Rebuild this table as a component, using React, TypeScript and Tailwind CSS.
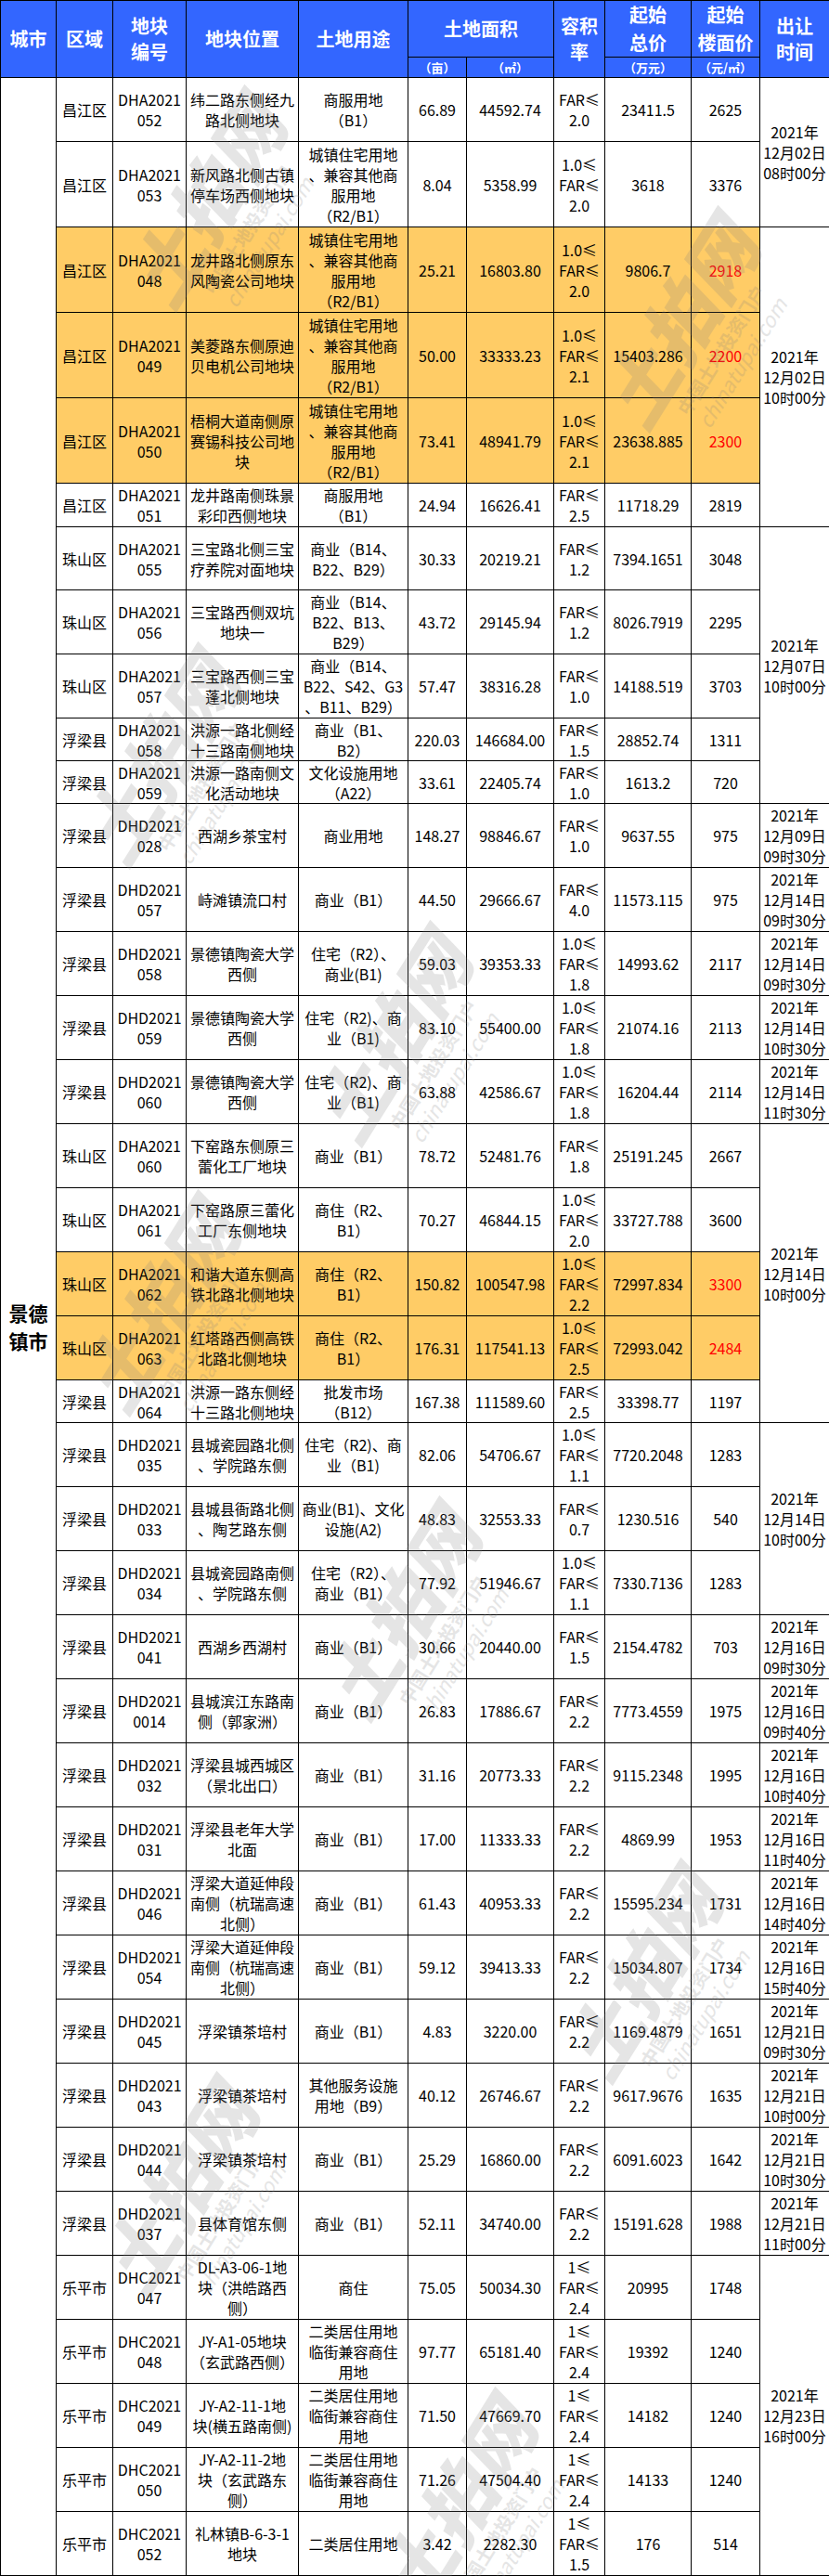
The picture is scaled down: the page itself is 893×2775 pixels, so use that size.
import React from "react";

type Row = {
  area: string;
  code: string[];
  loc: string[];
  use: string[];
  mu: string;
  sqm: string;
  far: string[];
  total: string;
  price: string;
  h: number;
  hl?: boolean;
};

const R2B1 = ["城镇住宅用地", "、兼容其他商", "服用地", "（R2/B1）"];
const LIVE = ["二类居住用地", "临街兼容商住", "用地"];
const B1 = ["商业（B1）"];
const F22 = ["FAR≤", "2.2"];
const FP = ["浮梁大道延伸段", "南侧（杭瑞高速", "北侧）"];

const rows: Row[] = [
  { area: "昌江区", code: ["DHA2021", "052"], loc: ["纬二路东侧经九", "路北侧地块"], use: ["商服用地", "（B1）"], mu: "66.89", sqm: "44592.74", far: ["FAR≤", "2.0"], total: "23411.5", price: "2625", h: 69 },
  { area: "昌江区", code: ["DHA2021", "053"], loc: ["新风路北侧古镇", "停车场西侧地块"], use: R2B1, mu: "8.04", sqm: "5358.99", far: ["1.0≤", "FAR≤", "2.0"], total: "3618", price: "3376", h: 92 },
  { area: "昌江区", code: ["DHA2021", "048"], loc: ["龙井路北侧原东", "风陶瓷公司地块"], use: R2B1, mu: "25.21", sqm: "16803.80", far: ["1.0≤", "FAR≤", "2.0"], total: "9806.7", price: "2918", h: 92, hl: true },
  { area: "昌江区", code: ["DHA2021", "049"], loc: ["美菱路东侧原迪", "贝电机公司地块"], use: R2B1, mu: "50.00", sqm: "33333.23", far: ["1.0≤", "FAR≤", "2.1"], total: "15403.286", price: "2200", h: 92, hl: true },
  { area: "昌江区", code: ["DHA2021", "050"], loc: ["梧桐大道南侧原", "赛锡科技公司地", "块"], use: R2B1, mu: "73.41", sqm: "48941.79", far: ["1.0≤", "FAR≤", "2.1"], total: "23638.885", price: "2300", h: 92, hl: true },
  { area: "昌江区", code: ["DHA2021", "051"], loc: ["龙井路南侧珠景", "彩印西侧地块"], use: ["商服用地", "（B1）"], mu: "24.94", sqm: "16626.41", far: ["FAR≤", "2.5"], total: "11718.29", price: "2819", h: 47 },
  { area: "珠山区", code: ["DHA2021", "055"], loc: ["三宝路北侧三宝", "疗养院对面地块"], use: ["商业（B14、", "B22、B29）"], mu: "30.33", sqm: "20219.21", far: ["FAR≤", "1.2"], total: "7394.1651", price: "3048", h: 68 },
  { area: "珠山区", code: ["DHA2021", "056"], loc: ["三宝路西侧双坑", "地块一"], use: ["商业（B14、", "B22、B13、", "B29）"], mu: "43.72", sqm: "29145.94", far: ["FAR≤", "1.2"], total: "8026.7919", price: "2295", h: 69 },
  { area: "珠山区", code: ["DHA2021", "057"], loc: ["三宝路西侧三宝", "蓬北侧地块"], use: ["商业（B14、", "B22、S42、G3", "、B11、B29）"], mu: "57.47", sqm: "38316.28", far: ["FAR≤", "1.0"], total: "14188.519", price: "3703", h: 69 },
  { area: "浮梁县", code: ["DHA2021", "058"], loc: ["洪源一路北侧经", "十三路南侧地块"], use: ["商业（B1、", "B2）"], mu: "220.03", sqm: "146684.00", far: ["FAR≤", "1.5"], total: "28852.74", price: "1311", h: 46 },
  { area: "浮梁县", code: ["DHA2021", "059"], loc: ["洪源一路南侧文", "化活动地块"], use: ["文化设施用地", "（A22）"], mu: "33.61", sqm: "22405.74", far: ["FAR≤", "1.0"], total: "1613.2", price: "720", h: 46 },
  { area: "浮梁县", code: ["DHD2021", "028"], loc: ["西湖乡茶宝村"], use: ["商业用地"], mu: "148.27", sqm: "98846.67", far: ["FAR≤", "1.0"], total: "9637.55", price: "975", h: 69 },
  { area: "浮梁县", code: ["DHD2021", "057"], loc: ["峙滩镇流口村"], use: B1, mu: "44.50", sqm: "29666.67", far: ["FAR≤", "4.0"], total: "11573.115", price: "975", h: 69 },
  { area: "浮梁县", code: ["DHD2021", "058"], loc: ["景德镇陶瓷大学", "西侧"], use: ["住宅（R2）、", "商业(B1)"], mu: "59.03", sqm: "39353.33", far: ["1.0≤", "FAR≤", "1.8"], total: "14993.62", price: "2117", h: 69 },
  { area: "浮梁县", code: ["DHD2021", "059"], loc: ["景德镇陶瓷大学", "西侧"], use: ["住宅（R2)、商", "业（B1)"], mu: "83.10", sqm: "55400.00", far: ["1.0≤", "FAR≤", "1.8"], total: "21074.16", price: "2113", h: 69 },
  { area: "浮梁县", code: ["DHD2021", "060"], loc: ["景德镇陶瓷大学", "西侧"], use: ["住宅（R2)、商", "业（B1)"], mu: "63.88", sqm: "42586.67", far: ["1.0≤", "FAR≤", "1.8"], total: "16204.44", price: "2114", h: 69 },
  { area: "珠山区", code: ["DHA2021", "060"], loc: ["下窑路东侧原三", "蕾化工厂地块"], use: B1, mu: "78.72", sqm: "52481.76", far: ["FAR≤", "1.8"], total: "25191.245", price: "2667", h: 69 },
  { area: "珠山区", code: ["DHA2021", "061"], loc: ["下窑路原三蕾化", "工厂东侧地块"], use: ["商住（R2、", "B1）"], mu: "70.27", sqm: "46844.15", far: ["1.0≤", "FAR≤", "2.0"], total: "33727.788", price: "3600", h: 69 },
  { area: "珠山区", code: ["DHA2021", "062"], loc: ["和谐大道东侧高", "铁北路北侧地块"], use: ["商住（R2、", "B1）"], mu: "150.82", sqm: "100547.98", far: ["1.0≤", "FAR≤", "2.2"], total: "72997.834", price: "3300", h: 69, hl: true },
  { area: "珠山区", code: ["DHA2021", "063"], loc: ["红塔路西侧高铁", "北路北侧地块"], use: ["商住（R2、", "B1）"], mu: "176.31", sqm: "117541.13", far: ["1.0≤", "FAR≤", "2.5"], total: "72993.042", price: "2484", h: 69, hl: true },
  { area: "浮梁县", code: ["DHA2021", "064"], loc: ["洪源一路东侧经", "十三路北侧地块"], use: ["批发市场", "（B12）"], mu: "167.38", sqm: "111589.60", far: ["FAR≤", "2.5"], total: "33398.77", price: "1197", h: 46 },
  { area: "浮梁县", code: ["DHD2021", "035"], loc: ["县城瓷园路北侧", "、学院路东侧"], use: ["住宅（R2)、商", "业（B1)"], mu: "82.06", sqm: "54706.67", far: ["1.0≤", "FAR≤", "1.1"], total: "7720.2048", price: "1283", h: 69 },
  { area: "浮梁县", code: ["DHD2021", "033"], loc: ["县城县衙路北侧", "、陶艺路东侧"], use: ["商业(B1)、文化", "设施(A2)"], mu: "48.83", sqm: "32553.33", far: ["FAR≤", "0.7"], total: "1230.516", price: "540", h: 69 },
  { area: "浮梁县", code: ["DHD2021", "034"], loc: ["县城瓷园路南侧", "、学院路东侧"], use: ["住宅（R2）、", "商业（B1）"], mu: "77.92", sqm: "51946.67", far: ["1.0≤", "FAR≤", "1.1"], total: "7330.7136", price: "1283", h: 69 },
  { area: "浮梁县", code: ["DHD2021", "041"], loc: ["西湖乡西湖村"], use: B1, mu: "30.66", sqm: "20440.00", far: ["FAR≤", "1.5"], total: "2154.4782", price: "703", h: 69 },
  { area: "浮梁县", code: ["DHD2021", "0014"], loc: ["县城滨江东路南", "侧（郭家洲）"], use: B1, mu: "26.83", sqm: "17886.67", far: F22, total: "7773.4559", price: "1975", h: 69 },
  { area: "浮梁县", code: ["DHD2021", "032"], loc: ["浮梁县城西城区", "（景北出口）"], use: B1, mu: "31.16", sqm: "20773.33", far: F22, total: "9115.2348", price: "1995", h: 69 },
  { area: "浮梁县", code: ["DHD2021", "031"], loc: ["浮梁县老年大学", "北面"], use: B1, mu: "17.00", sqm: "11333.33", far: F22, total: "4869.99", price: "1953", h: 69 },
  { area: "浮梁县", code: ["DHD2021", "046"], loc: FP, use: B1, mu: "61.43", sqm: "40953.33", far: F22, total: "15595.234", price: "1731", h: 69 },
  { area: "浮梁县", code: ["DHD2021", "054"], loc: FP, use: B1, mu: "59.12", sqm: "39413.33", far: F22, total: "15034.807", price: "1734", h: 69 },
  { area: "浮梁县", code: ["DHD2021", "045"], loc: ["浮梁镇茶培村"], use: B1, mu: "4.83", sqm: "3220.00", far: F22, total: "1169.4879", price: "1651", h: 69 },
  { area: "浮梁县", code: ["DHD2021", "043"], loc: ["浮梁镇茶培村"], use: ["其他服务设施", "用地（B9）"], mu: "40.12", sqm: "26746.67", far: F22, total: "9617.9676", price: "1635", h: 69 },
  { area: "浮梁县", code: ["DHD2021", "044"], loc: ["浮梁镇茶培村"], use: B1, mu: "25.29", sqm: "16860.00", far: F22, total: "6091.6023", price: "1642", h: 69 },
  { area: "浮梁县", code: ["DHD2021", "037"], loc: ["县体育馆东侧"], use: B1, mu: "52.11", sqm: "34740.00", far: F22, total: "15191.628", price: "1988", h: 69 },
  { area: "乐平市", code: ["DHC2021", "047"], loc: ["DL-A3-06-1地", "块（洪皓路西", "侧）"], use: ["商住"], mu: "75.05", sqm: "50034.30", far: ["1≤", "FAR≤", "2.4"], total: "20995", price: "1748", h: 69 },
  { area: "乐平市", code: ["DHC2021", "048"], loc: ["JY-A1-05地块", "（玄武路西侧）"], use: LIVE, mu: "97.77", sqm: "65181.40", far: ["1≤", "FAR≤", "2.4"], total: "19392", price: "1240", h: 69 },
  { area: "乐平市", code: ["DHC2021", "049"], loc: ["JY-A2-11-1地", "块(横五路南侧)"], use: LIVE, mu: "71.50", sqm: "47669.70", far: ["1≤", "FAR≤", "2.4"], total: "14182", price: "1240", h: 69 },
  { area: "乐平市", code: ["DHC2021", "050"], loc: ["JY-A2-11-2地", "块（玄武路东", "侧）"], use: LIVE, mu: "71.26", sqm: "47504.40", far: ["1≤", "FAR≤", "2.4"], total: "14133", price: "1240", h: 69 },
  { area: "乐平市", code: ["DHC2021", "052"], loc: ["礼林镇B-6-3-1", "地块"], use: ["二类居住用地"], mu: "3.42", sqm: "2282.30", far: ["1≤", "FAR≤", "1.5"], total: "176", price: "514", h: 69 },
];

// auction time cells: first row index -> [rowspan, day, time]
const times: Record<number, [number, string, string]> = {
  0: [2, "12月02日", "08时00分"],
  2: [4, "12月02日", "10时00分"],
  6: [5, "12月07日", "10时00分"],
  11: [1, "12月09日", "09时30分"],
  12: [1, "12月14日", "09时30分"],
  13: [1, "12月14日", "09时30分"],
  14: [1, "12月14日", "10时30分"],
  15: [1, "12月14日", "11时30分"],
  16: [5, "12月14日", "10时00分"],
  21: [3, "12月14日", "10时00分"],
  24: [1, "12月16日", "09时30分"],
  25: [1, "12月16日", "09时40分"],
  26: [1, "12月16日", "10时40分"],
  27: [1, "12月16日", "11时40分"],
  28: [1, "12月16日", "14时40分"],
  29: [1, "12月16日", "15时40分"],
  30: [1, "12月21日", "09时30分"],
  31: [1, "12月21日", "10时00分"],
  32: [1, "12月21日", "10时30分"],
  33: [1, "12月21日", "11时00分"],
  34: [5, "12月23日", "16时00分"],
};

const heights: Record<number, string> = {
  46: "h-[46px]",
  47: "h-[47px]",
  68: "h-[68px]",
  69: "h-[69px]",
  92: "h-[92px]",
};

// watermark stamps [left, top]
const marks: [number, number][] = [
  [90, 40],
  [600, 170],
  [40, 640],
  [290, 940],
  [40, 1230],
  [300, 1560],
  [560, 1950],
  [60, 2180],
  [360, 2520],
];

function Lines({ items }: { items: string[] }) {
  return (
    <>
      {items.map((t, i) => (
        <div key={i} className="whitespace-nowrap">
          {t}
        </div>
      ))}
    </>
  );
}

const td = "border border-black px-0 text-center align-middle";
const th = "border border-black px-0 text-center align-middle font-bold text-white";

export default function App() {
  return (
    <div
      className="relative w-[893px] overflow-hidden bg-white text-black"
      style={{ fontFamily: '"Noto Sans CJK SC", "Noto Sans", sans-serif' }}
    >
      <table className="w-[893px] table-fixed text-[16px] leading-[22px]">
        <colgroup>
          <col className="w-[60px]" />
          <col className="w-[61px]" />
          <col className="w-[79px]" />
          <col className="w-[121px]" />
          <col className="w-[118px]" />
          <col className="w-[63px]" />
          <col className="w-[94px]" />
          <col className="w-[55px]" />
          <col className="w-[93px]" />
          <col className="w-[74px]" />
          <col className="w-[75px]" />
        </colgroup>
        <thead className="bg-[#3366ff] text-[20px] leading-[28px]">
          <tr className="h-[61px]">
            <th rowSpan={2} className={th}>城市</th>
            <th rowSpan={2} className={th}>区域</th>
            <th rowSpan={2} className={th}>地块<br />编号</th>
            <th rowSpan={2} className={th}>地块位置</th>
            <th rowSpan={2} className={th}>土地用途</th>
            <th colSpan={2} className={th}>土地面积</th>
            <th rowSpan={2} className={th}>容积<br />率</th>
            <th className={`${th} leading-[30px]`}>起始<br />总价</th>
            <th className={`${th} leading-[30px]`}>起始<br />楼面价</th>
            <th rowSpan={2} className={th}>出让<br />时间</th>
          </tr>
          <tr className="h-[22px] text-[13px] leading-[20px]">
            <th className={th}>（亩）</th>
            <th className={th}>（㎡）</th>
            <th className={th}>（万元）</th>
            <th className={th}>（元/㎡）</th>
          </tr>
        </thead>
        <tbody>
          {rows.map((r, i) => {
            const bg = r.hl ? "bg-[#ffcc66]" : "";
            const t = times[i];
            return (
              <tr key={i} className={heights[r.h]}>
                {i === 0 && (
                  <td
                    rowSpan={rows.length}
                    className={`${td} text-[21px] leading-[30px] font-bold`}
                  >
                    景德
                    <br />
                    镇市
                  </td>
                )}
                <td className={`${td} ${bg}`}>{r.area}</td>
                <td className={`${td} ${bg}`}>
                  <Lines items={r.code} />
                </td>
                <td className={`${td} ${bg}`}>
                  <Lines items={r.loc} />
                </td>
                <td className={`${td} ${bg}`}>
                  <Lines items={r.use} />
                </td>
                <td className={`${td} ${bg}`}>{r.mu}</td>
                <td className={`${td} ${bg}`}>{r.sqm}</td>
                <td className={`${td} ${bg}`}>
                  <Lines items={r.far} />
                </td>
                <td className={`${td} ${bg}`}>{r.total}</td>
                <td className={`${td} ${bg} ${r.hl ? "text-[#ff0000]" : ""}`}>
                  {r.price}
                </td>
                {t && (
                  <td rowSpan={t[0]} className={td}>
                    <Lines items={["2021年", t[1], t[2]]} />
                  </td>
                )}
              </tr>
            );
          })}
        </tbody>
      </table>

      {/* diagonal site watermark */}
      {marks.map(([x, y], i) => (
        <div
          key={i}
          className="pointer-events-none absolute flex w-[300px] -rotate-[58deg] flex-col items-center text-[#808080] opacity-20 select-none"
          style={{ left: x, top: y + 120 }}
        >
          <div className="whitespace-nowrap text-[80px] font-black italic leading-[90px]">
            土拍网
          </div>
          <div className="whitespace-nowrap text-[20px] font-bold leading-[24px]">
            中国土地投资门户
          </div>
          <div className="whitespace-nowrap text-[22px] italic leading-[26px]">
            chinatupai.com
          </div>
        </div>
      ))}
    </div>
  );
}
